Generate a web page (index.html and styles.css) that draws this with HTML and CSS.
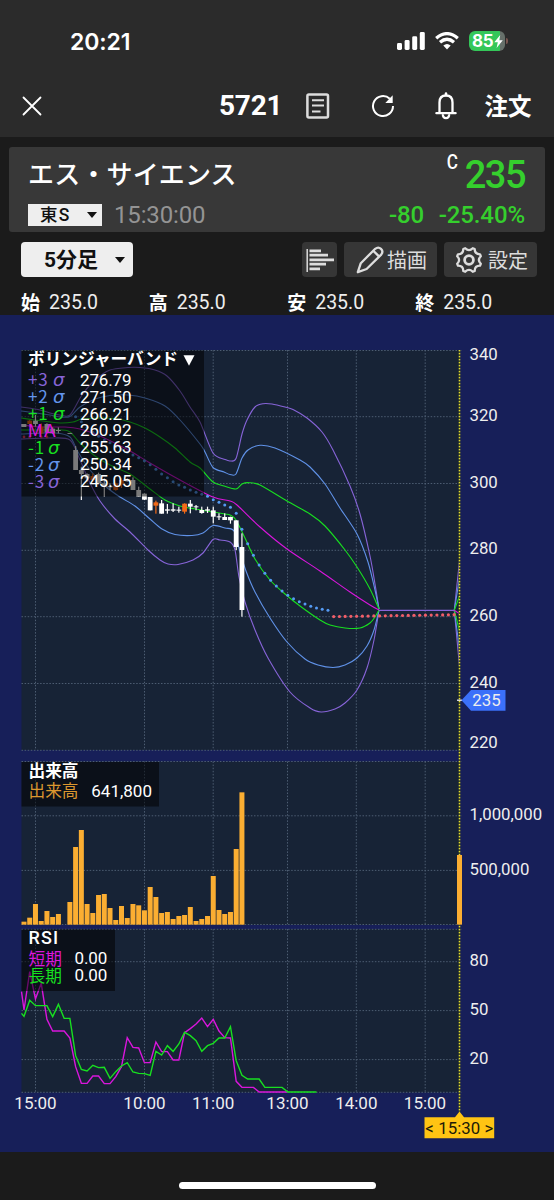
FILE: index.html
```html
<!DOCTYPE html>
<html lang="ja">
<head>
<meta charset="utf-8">
<title>5721 エス・サイエンス</title>
<link rel="stylesheet" href="styles.css">
</head>
<body>
<div class="phone">
  <header class="top">
    <div class="status">
      <span class="clock">20:21</span>
      <div class="indicators">
        <svg class="signal" width="28" height="18" viewBox="0 0 28 18"><g fill="#fff"><rect x="0" y="11" width="5" height="7" rx="1.4"/><rect x="7.6" y="8" width="5" height="10" rx="1.4"/><rect x="15.2" y="4.3" width="5" height="13.7" rx="1.4"/><rect x="22.8" y="0" width="5" height="18" rx="1.4"/></g></svg>
        <svg class="wifi" width="24" height="18" viewBox="0 0 24 18"><g fill="none" stroke="#fff" stroke-width="3.3"><path d="M1.2 6.2 Q12 -2.9 22.8 6.2"/><path d="M5 10.2 Q12 4.3 19 10.2"/></g><path d="M8.3 13.5 Q12 10.4 15.7 13.5 L12 17.4Z" fill="#fff"/></svg>
        <div class="battery"><span>85</span><svg width="9" height="13" viewBox="0 0 9 13"><path d="M6.2 0 L.3 7.2 H3.8 L2.6 13 L8.8 5.3 H5.3Z" fill="#fff"/></svg></div><i class="battery-tip"></i>
      </div>
    </div>
    <nav class="nav">
      <svg class="close" width="20" height="20" viewBox="0 0 20 20"><path d="M1.5 1.5 18.5 18.5M18.5 1.5 1.5 18.5" stroke="#fff" stroke-width="1.8" stroke-linecap="round"/></svg>
      <span class="code">5721</span>
      <svg class="memo" width="24" height="26" viewBox="0 0 24 26"><rect x="1.4" y="1.4" width="20.6" height="23" rx="1.5" fill="none" stroke="#ddd" stroke-width="2.5"/><path d="M6 7.2H18M6 12.6H18M6 18.4H14.5" stroke="#ddd" stroke-width="2"/></svg>
      <svg class="reload" width="24" height="24" viewBox="0 0 24 24"><path d="M22 12 A10 10 0 1 1 18.8 4.7" fill="none" stroke="#fff" stroke-width="2"/><path d="M21.7 1.2V9H14.3Z" fill="#fff"/></svg>
      <svg class="bell" width="24" height="28" viewBox="0 0 24 28"><g fill="none" stroke="#fff" stroke-width="2.3"><path d="M5.5 21V10.5Q5.5 3.5 12 3.5T18.5 10.5V21"/><path d="M2.4 21.2H21.6" stroke-linecap="round"/><path d="M9 22.3A3.1 3.1 0 1 0 15 22.3"/></g><path d="M12 3V1.5" stroke="#fff" stroke-width="2.6" stroke-linecap="round"/></svg>
      <span class="order">注文</span>
    </nav>
  </header>

  <section class="quote">
    <div class="quote-row name-row"><h1>エス・サイエンス</h1><div class="price"><sup>C</sup><strong>235</strong></div></div>
    <div class="quote-row sub-row">
      <div class="market">東S<i class="tri"></i></div><span class="asof">15:30:00</span>
      <div class="change"><span>-80</span><span>-25.40%</span></div>
    </div>
  </section>

  <section class="tools">
    <div class="interval">5分足<i class="tri"></i></div>
    <div class="tool tool-bars"><svg width="28" height="24" viewBox="0 0 28 24"><path d="M1.2 1V24" stroke="#ddd" stroke-width="1.5"/><path d="M3.5 2.8H15M3.5 7.2H22M3.5 11.8H28M3.5 16.2H20M3.5 20.8H14" stroke="#ddd" stroke-width="2.8"/></svg></div>
    <div class="tool tool-draw"><svg width="28" height="28" viewBox="0 0 28 28"><g fill="none" stroke="#ddd" stroke-width="2.3" stroke-linejoin="round"><path d="M1.8 26.2 4.8 17.2 19.2 2.8Q22.3.3 25 2.9T25.2 8.6L10.6 23Z"/></g><path d="M17.5 5 23 10.4" stroke="#ddd" stroke-width="2.4"/></svg>描画</div>
    <div class="tool tool-set"><svg width="28" height="28" viewBox="0 0 28 28"><g fill="none" stroke="#ddd" stroke-width="2.3" stroke-linejoin="round"><path d="M10.2 2.2 Q14 6 17.8 2.2 L19.7 3 Q19.5 8 25 8.3 L25.8 10.2 Q22 14 25.8 17.8 L25 19.7 Q19.7 19.7 19.7 25 L17.8 25.8 Q14 22 10.2 25.8 L8.3 25 Q8.3 19.7 3 19.7 L2.2 17.8 Q6 14 2.2 10.2 L3 8.3 Q8.3 8.3 8.3 3Z"/><circle cx="14" cy="14" r="4.4" stroke-width="2.8"/></g></svg>設定</div>
  </section>

  <section class="ohlc">
    <div><b>始</b>235.0</div><div><b>高</b>235.0</div><div><b>安</b>235.0</div><div><b>終</b>235.0</div>
  </section>

  <svg class="chart" width="554" height="837" viewBox="0 315 554 837">
    <rect class="plot" x="21.5" y="350" width="438" height="400"/>
    <rect class="plot" x="21.5" y="761.5" width="438" height="163.5"/>
    <rect class="plot" x="21.5" y="929" width="438" height="163.5"/>
    <g class="grid" id="grid"></g>
    <g class="curves" id="curves"></g>
    <g id="dots"></g>
    <g id="candles"></g>
    <g class="volume" id="volume"></g>
    <g class="rsi" id="rsi"></g>
    <path class="cursor-base" d="M459.5 350V1112"/>
    <path class="cursor" d="M459.5 350V1112"/>
    <rect class="volume" x="457" y="855" width="5" height="69.6"/>
    <path d="M457 700.2H462" stroke="#fff" stroke-width="1.2"/>

    <rect class="legend" x="21.5" y="350.5" width="182.5" height="146"/>
    <rect class="legend" x="21.5" y="762" width="137.5" height="44.5"/>
    <rect class="legend" x="21.5" y="929.5" width="93.5" height="61.5"/>

    <text class="title" x="28" y="365.3" textLength="150">ボリンジャーバンド</text>
    <path d="M183.5 355.3H194.5L189 365.8Z" fill="#fff"/>
    <g class="key">
      <text class="c3" x="28" y="385.8">+3<tspan class="sigma" x="53">σ</tspan></text>
      <text class="c2" x="28" y="402.8">+2<tspan class="sigma" x="53">σ</tspan></text>
      <text class="c1" x="28" y="419.7">+1<tspan class="sigma" x="53">σ</tspan></text>
      <text class="c0" x="27.5" y="436.7" textLength="29" lengthAdjust="spacingAndGlyphs">MA</text>
      <text class="c1" x="28" y="453.5">-1<tspan class="sigma" x="48">σ</tspan></text>
      <text class="c2" x="28" y="470.5">-2<tspan class="sigma" x="48">σ</tspan></text>
      <text class="c3" x="28" y="487.5">-3<tspan class="sigma" x="48">σ</tspan></text>
    </g>
    <g class="val">
      <text x="80" y="385.6">276.79</text><text x="80" y="402.6">271.50</text><text x="80" y="419.5">266.21</text><text x="80" y="436.4">260.92</text><text x="80" y="453.4">255.63</text><text x="80" y="470.3">250.34</text><text x="80" y="487.3">245.05</text>
      <text x="91.3" y="796.8" textLength="60.5">641,800</text>
      <text x="74.5" y="964.2">0.00</text><text x="74.5" y="981.2">0.00</text>
    </g>
    <text class="title" x="28.5" y="776.8" textLength="50">出来高</text>
    <text class="label orange" x="28.5" y="797">出来高</text>
    <text class="title rsi-title" x="28.5" y="944.3" textLength="29.5">RSI</text>
    <text class="label c0" x="28.5" y="964.6">短期</text>
    <text class="label c1" x="28.5" y="981.6">長期</text>

    <g class="axis">
      <text x="469.5" y="360">340</text><text x="469.5" y="421">320</text><text x="469.5" y="487.7">300</text><text x="469.5" y="554.3">280</text><text x="469.5" y="621">260</text><text x="469.5" y="687.7">240</text><text x="469.5" y="748.3">220</text>
      <text x="469.5" y="820.2">1,000,000</text><text x="469.5" y="875">500,000</text>
      <text x="469.5" y="965.8">80</text><text x="469.5" y="1015">50</text><text x="469.5" y="1064">20</text>
    </g>
    <g class="axis times"><text x="35.5" y="1108.5">15:00</text><text x="144.5" y="1108.5">10:00</text><text x="213.2" y="1108.5">11:00</text><text x="287.5" y="1108.5">13:00</text><text x="356.3" y="1108.5">14:00</text><text x="425" y="1108.5">15:00</text></g>
    <path d="M461.5 700.2 471 690H505.5V710.8H471Z" fill="#3b70fa"/>
    <text class="axis" x="472.3" y="706.2">235</text>
    <path d="M424.5 1117.3H455L459.5 1111.5 464 1117.3H494.2V1138.3H424.5Z" fill="#ffc413"/>
    <text class="axis dark" x="425.3" y="1134" textLength="68">&lt; 15:30 &gt;</text>
  </svg>
  <footer class="home"><i></i></footer>
</div>
<script src="chart.js"></script>
</body>
</html>
```

FILE: styles.css
```css
* { box-sizing: border-box; }
body { margin: 0; background: #1b1b1b; color: #fff; font-family: Roboto, "Noto Sans CJK JP", sans-serif; }
.phone { width: 554px; height: 1200px; overflow: hidden; display: flex; flex-direction: column; }
.top { height: 137px; background: #2b2b2b; flex: none; }
.status { height: 76px; padding: 7px 47px 0 70px; display: flex; justify-content: space-between; align-items: center; }
.clock { font: 600 23px/28px Inter, sans-serif; letter-spacing: -.1px; }
.indicators { display: flex; align-items: center; margin: -1px -1px 0 0; }
.wifi { margin-left: 10px; }
.battery { margin-left: 10px; width: 36px; height: 20px; border-radius: 6px; background: linear-gradient(90deg, #34c759 86%, #66706a 86%); display: flex; align-items: center; padding-left: 3px; font: 700 17px/20px Inter, sans-serif; letter-spacing: -.2px; }
.battery-tip { width: 2px; height: 6px; margin-left: 1px; border-radius: 0 2px 2px 0; background: #795650; }
.nav { height: 60px; padding: 0 22px; display: flex; align-items: center; }
.code { font-size: 28px; line-height: 32px; font-weight: 700; letter-spacing: -.2px; margin: 0 0 0 177px; }
.memo { margin-left: 24px; }
.reload { margin-left: 41px; }
.bell { margin-left: 39px; }
.order { font: 700 23.5px/34px "Noto Sans CJK JP", sans-serif; margin: -2px 0 0 26px; white-space: nowrap; }
.quote { height: 85px; margin: 10px 9px 0; padding: 0 20px 0 19px; border-radius: 3px; background: #383838; flex: none; }
.quote-row { display: flex; }
.name-row { height: 52px; justify-content: space-between; }
h1 { margin: 9px 0 0; font: 500 26px/34px "Noto Sans CJK JP", sans-serif; letter-spacing: .2px; }
.price { display: flex; color: #35cf2d; }
sup { color: #fff; font-size: 19.5px; line-height: 20px; margin: 6px 6px 0 0; font-weight: 500; transform: scaleX(.88); }
strong { font-size: 38px; line-height: 56px; font-weight: 500; letter-spacing: -1.5px; }
.sub-row { height: 33px; }
.market { width: 74px; height: 22px; margin-top: 5px; background: #eee; color: #111; font: 500 17.5px/21px Roboto, "Noto Sans CJK JP", sans-serif; display: flex; align-items: center; padding: 0 5px 0 12px; justify-content: space-between; letter-spacing: 1.2px; }
.tri { border: 5.5px solid transparent; border-top: 6.5px solid #111; border-bottom: 0; }
.asof { margin-left: 12px; color: #949494; font-size: 24px; line-height: 32px; letter-spacing: -.15px; }
.change { margin-left: auto; display: flex; gap: 14.5px; color: #35cf2d; font-size: 24px; font-weight: 500; line-height: 32px; letter-spacing: -.1px; }
.tools { height: 46px; margin-top: 10px; padding: 0 17px 0 21px; display: flex; flex: none; }
.interval { width: 112px; height: 35px; border-radius: 4px; background: #eee; color: #111; font: 700 21px/34px Roboto, "Noto Sans CJK JP", sans-serif; display: flex; justify-content: space-between; align-items: center; padding: 0 8px 0 23px; white-space: nowrap; }
.tool { height: 35px; border-radius: 4px; background: #363636; display: flex; align-items: center; font: 400 20px/34px "Noto Sans CJK JP", sans-serif; color: #ddd; white-space: nowrap; }
.tool-bars { width: 35px; margin-left: 169px; justify-content: center; }
.tool-draw { width: 93px; margin-left: 7px; padding-left: 12px; gap: 3px; }
.tool-set { width: 93px; margin-left: 7px; padding-left: 11px; gap: 5px; }
.ohlc { height: 27px; padding-left: 21px; display: grid; grid-template-columns: 127.7px 138.5px 128px 130px; font-size: 19.5px; line-height: 27px; flex: none; color: #eee; }
.ohlc div { display: flex; white-space: nowrap; align-items: center; padding-top: 1px; }
.ohlc b { font: 700 19px/22px "Noto Sans CJK JP", sans-serif; margin-right: 9px; color: #fff; margin-top: -2px; }
.chart { display: block; flex: none; background: #171f59; }
.plot { fill: #172336; }
.grid path { stroke: #4d5d72; stroke-width: 1; stroke-dasharray: 1.5 1.6; fill: none; }
.curves path { fill: none; stroke-width: 1.1; }
.line3 { stroke: #8764d8; } .line2 { stroke: #6092e8; } .line1 { stroke: #18df20; } .line0 { stroke: #d916dc; }
.volume { fill: #fbae32; }
.rsi path { fill: none; stroke-width: 1.4; }
.cursor-base { stroke: #48501c; stroke-width: 1.5; }
.cursor { stroke: #e4dc34; stroke-width: 1.5; stroke-dasharray: 1.2 1.8; }
.legend { fill: #000; fill-opacity: .52; }
.title { font: 700 16.7px "Noto Sans CJK JP", sans-serif; fill: #fff; }
.rsi-title { font: 500 18px Roboto, sans-serif; }
.key { font: 400 17px "Noto Sans CJK JP", sans-serif; letter-spacing: .8px; }
.sigma { font: italic 400 18px "DejaVu Sans", sans-serif; letter-spacing: 0; }
.label { font: 400 16.7px "Noto Sans CJK JP", sans-serif; }
.c3 { fill: #8764d8; } .c2 { fill: #6395ec; } .c1 { fill: #18df20; } .c0 { fill: #d916dc; } .orange { fill: #dc972f; }
.val { font-size: 17px; fill: #fff; letter-spacing: -.15px; }
.axis { font-size: 16.8px; fill: #eee; }
.times { text-anchor: middle; font-size: 17px; }
.dark { fill: #201a07; }
.home { flex: 1; display: flex; justify-content: center; padding-top: 30px; }
.home i { width: 197px; height: 7px; border-radius: 4px; background: #fff; }
```

FILE: chart.js
```js
const NS = 'http://www.w3.org/2000/svg';
const STEP = 5.735;
const slot = i => 24 + i * STEP;
function add(id, tag, attrs) {
  const el = document.createElementNS(NS, tag);
  for (const k in attrs) el.setAttribute(k, attrs[k]);
  document.getElementById(id).appendChild(el);
}
// Catmull-Rom interpolation with damped tangents
function smooth(p) {
  let d = `M${p[0]}`;
  for (let i = 0; i < p.length - 1; i++) {
    const a = p[i - 1] || p[i], b = p[i], c = p[i + 1], e = p[i + 2] || c;
    const t = 1 / 7;
    d += `C${b[0] + (c[0] - a[0]) * t} ${b[1] + (c[1] - a[1]) * t} ${c[0] - (e[0] - b[0]) * t} ${c[1] - (e[1] - b[1]) * t} ${c}`;
  }
  return d;
}
const xs = [35.5, 144.5, 213.2, 287.5, 356.3, 425.2];
[[350, 750], [761.5, 924.5], [929, 1092]].forEach(([a, b]) => xs.forEach(x => add('grid', 'path', { d: `M${x} ${a}V${b}` })));
[350.5, 416.7, 483.5, 550.3, 616.7, 683.5, 750.3, 761.5, 815.8, 870.4, 924.5, 929.3, 961.7, 1010.6, 1059.6, 1092.3]
  .forEach(y => add('grid', 'path', { d: `M21.5 ${y}H462` }));

const bands = [
  ['line3', 560.7, '21.5,407 40,410 50,413 60,415 70,415 82,395 95,380 110,370 128,367.5 140,367.5 155,370 167,376 180,391 190,407 200,422 213,453 225,459.5 230,461 236,458.5 242,434 247,420 255,407 263,403.7 272,404 285,407 293,409.5 307,418 322,432 333,450 350,486 360,514 370,556 375,584 379,609'],
  ['line3', 666.5, '21.5,439 50,438 70,440 80,460 90,483 100,501 115,519 130,532 148,550 160,560 168,564 178,564.5 193,560 203,553 213,539.5 220,540 230,542 235,550 239,577 245,602 255,630 268,658 290,692 310,708 321,712 335,709 345,703 357,690 367,668 374,640 379,610'],
  ['line2', 578.3, '21.5,411 50,415 60,417 70,416.5 80,407 95,399 110,395.5 128,395 145,398 165,406 180,420 200,444 205,452 213,467.5 224,472 230,474.5 236,474 242,458 248,450 260,445.3 275,448 300,460 310,467 325,484 340,508 357,534 368,562 375,590 379,609'],
  ['line2', 649, '21.5,434 55,433 70,437 78,452 90,470 105,486 120,497 135,506 150,519 162,529 175,534.5 192,535.5 203,533 213,525.5 225,528 234,531 240,552 246,571 255,592 270,618 287,642 305,659 318,665 333,667.5 345,665 357,658 367,646 374,630 379,610'],
  ['line1', 596, '21.5,418 35,420 60,423 73,422 82,419 100,418 115,418.5 130,422 145,428 160,437 175,448 190,462 200,468 213,482 224,486 236,489 242,484 249,482.7 260,485 287,501 310,514 325,526 345,550 357,567 370,589 379,609'],
  ['line1', 631, '21.5,430 60,430 70,432 80,443 95,456 110,465 130,474 150,489 165,500 180,506 195,509 213,512 225,514 230,515 236,520 245,538 255,559 270,580 285,594 300,606 320,620 330,625 345,628 360,628 370,623 375,617 379,610'],
  ['line0', 613.6, '21.5,425 40,427 65,427 80,429 100,436 130,451 150,463 180,480 213,497 230,501 237,505 260,527 287,549 320,571 350,592 370,605 379,610']
];
bands.forEach(([cls, end, pts]) => {
  const p = pts.split(' ').map(s => s.split(',').map(Number));
  add('curves', 'path', { class: cls, d: smooth(p) + `M454.3 610.2L459.5 ${end}` });
});
add('curves', 'path', { class: 'line3', d: 'M379 610.4H454.3' });

// Trailing dots, one per slot starting at slot 9
[230, 245, 262, 277, 289, 300, 308, 320, 328, 337, 345, 353, 362, 374, 388, 402, 413, 425, 435, 442, 450, 457, 463, 469, 479, 487, 495, 502, 520, 568, 611, 646, 675, 700, 721, 738, 753, 766, 776, 785, 792, 799, 804, 808, 811]
  .forEach((v, k) => add('dots', 'circle', { cx: slot(k + 9), cy: 340 + v / 3, r: 1.5, fill: '#559bf4' }));
for (let k = 54; k <= 75; k++) add('dots', 'circle', { cx: slot(k), cy: 616.6 - (k - 54) * .09, r: 1.6, fill: '#f25e68' });
[0, 1, 3, 4].forEach(k => add('dots', 'circle', { cx: slot(k), cy: 437, r: 1.4, fill: '#e73f61' }));

// slot, body top, body bottom, wick top, wick bottom, rising flag; thirds of a pixel below y=340
[
  [0, 252, 261, 252, 261], [1, 242, 252, 240, 260, 1], [2, 242, 252, 225, 260], [3, 260, 280, 250, 282, 1], [4, 252, 278, 250, 280], [5, 266, 280, 262, 282], [6, 270, 273, 262, 280], [8, 279, 282, 279, 282],
  [9, 330, 390, 318, 390], [10, 390, 402, 380, 480], [11, 402, 415, 400, 425], [12, 408, 420, 400, 425, 1], [13, 402, 430, 398, 432], [14, 430, 440, 415, 470], [15, 438, 442, 430, 450], [16, 430, 450, 428, 452, 1], [17, 420, 434, 415, 444, 1], [18, 420, 424, 415, 425],
  [19, 420, 450, 412, 450], [20, 450, 470, 440, 470], [21, 461, 479, 460, 480], [22, 471, 511, 471, 511], [23, 487, 497, 482, 521, 1], [24, 490, 521, 480, 521], [25, 508, 512, 492, 521], [26, 508, 512, 490, 516], [27, 509, 512, 500, 518], [28, 491, 515, 490, 521, 1], [29, 491, 500, 480, 520], [30, 499, 502, 495, 511], [31, 510, 519, 500, 521], [32, 508, 512, 500, 519], [33, 511, 530, 500, 550], [34, 529, 532, 520, 540], [35, 531, 540, 520, 540], [36, 531, 541, 530, 551], [37, 541, 621, 541, 630], [38, 621, 810, 580, 830]
].forEach(([i, t, b, wt, wb, up]) => {
  const fill = up ? '#f46a18' : '#fff', x = slot(i);
  add('candles', 'rect', { x: x - .6, y: 340 + wt / 3, width: 1.2, height: (wb - wt) / 3, fill });
  add('candles', 'rect', { x: x - 2.4, y: 340 + t / 3, width: 4.8, height: (b - t) / 3, fill });
});

[545, 533, 492, 543, 513, 531, 522, 0, 486, 321, 270, 492, 519, 465, 462, 504, 540, 498, 534, 492, 496, 511, 441, 471, 519, 516, 537, 528, 525, 501, 543, 537, 528, 408, 510, 522, 516, 327, 157]
  .forEach((v, i) => v && add('volume', 'rect', { x: slot(i) - 2.5, y: 740 + v / 3, width: 5, height: (554 - v) / 3 }));

const rsi = (cls, first, vals) => add('rsi', 'path', {
  class: cls,
  d: `M21.5 ${920 + first / 3}` + vals.map((v, i) => `L${slot(i)} ${920 + v / 3}`).join('')
});
rsi('line0', 215, [270, 155, 237, 190, 298, 333, 333, 333, 354, 440, 490, 490, 468, 468, 491, 491, 470, 440, 353, 382, 384, 428, 428, 366, 395, 395, 420, 420, 338, 326, 312, 294, 320, 298, 333, 353, 354, 484, 502, 502, 502, 516, 516, 516, 516, 516, 516]);
rsi('line1', 280, [289, 241, 257, 257, 257, 290, 253, 295, 295, 407, 448, 453, 436, 443, 442, 475, 455, 438, 428, 456, 460, 461, 466, 394, 405, 377, 394, 372, 337, 347, 362, 394, 377, 370, 354, 354, 320, 422, 466, 477, 477, 477, 502, 502, 502, 502, 516, 516, 516, 516, 516, 516]);
```
